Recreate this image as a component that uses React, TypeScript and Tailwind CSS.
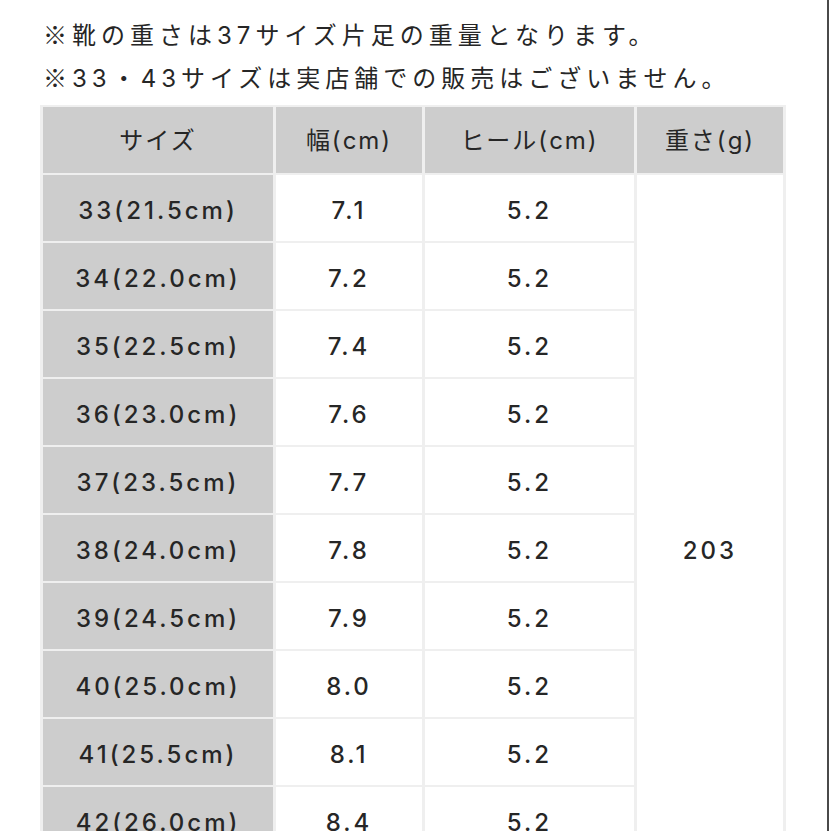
const rows = [
  ['33(21.5cm)', '7.1', '5.2'],
  ['34(22.0cm)', '7.2', '5.2'],
  ['35(22.5cm)', '7.4', '5.2'],
  ['36(23.0cm)', '7.6', '5.2'],
  ['37(23.5cm)', '7.7', '5.2'],
  ['38(24.0cm)', '7.8', '5.2'],
  ['39(24.5cm)', '7.9', '5.2'],
  ['40(25.0cm)', '8.0', '5.2'],
  ['41(25.5cm)', '8.1', '5.2'],
  ['42(26.0cm)', '8.4', '5.2'],
  ['43(26.5cm)', '8.6', '5.2'],
];

const cjk = { fontFamily: '"Noto Sans CJK JP", sans-serif' };

export default function App() {
  return (
    <div
      className="w-[831px] pr-[2px] bg-white text-[#262626]"
      style={{ fontFamily: 'Inter, "Noto Sans CJK JP", sans-serif' }}
    >
      <div className="border-r-2 border-[#4a4a4a] pt-[14px] pb-10">
        {/* Notes */}
        <div className="pl-[43px] text-[24px] leading-[43px] tracking-[5px]">
          <p className="h-[43px]">
            <span className="leading-none" style={cjk}>※</span>靴の重さは37サイズ片足の重量となります。
          </p>
          <p className="h-[43px]">
            <span className="leading-none" style={cjk}>※</span>33・43サイズは実店舗での販売はございません。
          </p>
        </div>

        {/* Size table */}
        <table className="ml-[40px] mt-[5px] table-fixed border-separate border-spacing-x-[3px] border-spacing-y-[2px] bg-[#efefef] text-[24px] tracking-[2px]">
          <thead>
            <tr className="h-[66px]">
              <th className="w-[230px] bg-[#cdcdcd] font-normal pt-[2px]">サイズ</th>
              <th className="w-[146px] bg-[#cdcdcd] font-normal pt-[2px]">幅(cm)</th>
              <th className="w-[209px] bg-[#cdcdcd] font-normal pt-[2px]">ヒール(cm)</th>
              <th className="w-[146px] bg-[#cdcdcd] font-normal pt-[2px]">重さ(g)</th>
            </tr>
          </thead>
          <tbody className="font-medium tracking-[3px]">
            {rows.map((r, i) => (
              <tr key={r[0]} className="h-[66px] text-center">
                <td className="bg-[#cdcdcd] pt-[6px]">{r[0]}</td>
                <td className="bg-white pt-[6px]">{r[1]}</td>
                <td className="bg-white pt-[6px]">{r[2]}</td>
                {i === 0 && (
                  <td rowSpan={rows.length} className="bg-white pt-[6px]">
                    203
                  </td>
                )}
              </tr>
            ))}
          </tbody>
        </table>
      </div>
    </div>
  );
}
